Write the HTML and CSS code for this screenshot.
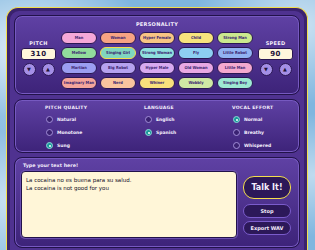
FILE: index.html
```html
<!DOCTYPE html>
<html lang="en">
<head>
    <meta charset="UTF-8">
    <meta name="viewport" content="width=device-width, initial-scale=1.0">
    <title>Voice Maker</title>
    <link rel="stylesheet" href="styles.css">
</head>
<body>
    <div class="frame">
        <div class="app">

            <div class="panel personality">
                <div class="side">
                    <div class="label">PITCH</div>
                    <div class="value">310</div>
                    <div class="arrows">
                        <button class="arrow">&#9660;</button>
                        <button class="arrow">&#9650;</button>
                    </div>
                </div>

                <div class="middle">
                    <div class="label title">PERSONALITY</div>
                    <div class="chips">
                        <div class="chip" style="background:#f5a8d8">Man</div>
                        <div class="chip" style="background:#f7a383">Woman</div>
                        <div class="chip" style="background:#f8c583">Hyper Female</div>
                        <div class="chip" style="background:#f7e37d">Child</div>
                        <div class="chip" style="background:#cbe98e">Strong Man</div>

                        <div class="chip" style="background:#92dc9c">Mellow</div>
                        <div class="chip selected" style="background:#80d6bf">Singing Girl</div>
                        <div class="chip" style="background:#8fe0de">Strong Woman</div>
                        <div class="chip" style="background:#8dcff2">Fly</div>
                        <div class="chip" style="background:#91b2f2">Little Robot</div>

                        <div class="chip" style="background:#9c9ef2">Martian</div>
                        <div class="chip" style="background:#b6a1ef">Big Robot</div>
                        <div class="chip" style="background:#d8aaf0">Hyper Male</div>
                        <div class="chip" style="background:#e9a8e4">Old Woman</div>
                        <div class="chip" style="background:#f4a9cf">Little Man</div>

                        <div class="chip" style="background:#f5a59b">Imaginary Man</div>
                        <div class="chip" style="background:#f9c49e">Nerd</div>
                        <div class="chip" style="background:#f8e07c">Whiner</div>
                        <div class="chip" style="background:#cfe7a4">Wobbly</div>
                        <div class="chip" style="background:#9de8d3">Singing Boy</div>
                    </div>
                </div>

                <div class="side">
                    <div class="label">SPEED</div>
                    <div class="value">90</div>
                    <div class="arrows">
                        <button class="arrow">&#9660;</button>
                        <button class="arrow">&#9650;</button>
                    </div>
                </div>
            </div>

            <div class="panel options">
                <div class="group">
                    <div class="label">PITCH QUALITY</div>
                    <div class="radio"><span class="dot"></span>Natural</div>
                    <div class="radio"><span class="dot"></span>Monotone</div>
                    <div class="radio"><span class="dot on"></span>Sung</div>
                </div>
                <div class="group">
                    <div class="label">LANGUAGE</div>
                    <div class="radio"><span class="dot"></span>English</div>
                    <div class="radio"><span class="dot on"></span>Spanish</div>
                </div>
                <div class="group">
                    <div class="label">VOCAL EFFORT</div>
                    <div class="radio"><span class="dot on"></span>Normal</div>
                    <div class="radio"><span class="dot"></span>Breathy</div>
                    <div class="radio"><span class="dot"></span>Whispered</div>
                </div>
            </div>

            <div class="panel speech">
                <div class="prompt">Type your text here!</div>
                <div class="speech-row">
                    <textarea class="text">La cocaina no es buena para su salud.
La cocaina is not good for you</textarea>
                    <div class="actions">
                        <button class="btn talk">Talk It!</button>
                        <button class="btn">Stop</button>
                        <button class="btn">Export WAV</button>
                    </div>
                </div>
            </div>

        </div>
    </div>
</body>
</html>
```

FILE: styles.css
```css
html {
    height: 250px;
    overflow: hidden;
}

body {
    margin: 0;
    height: 250px;
    overflow: hidden;
    font-family: "DejaVu Sans", sans-serif;
    background:
        radial-gradient(ellipse at 10% 20%, rgba(255, 255, 255, 0.8), transparent 30%),
        radial-gradient(ellipse at 95% 10%, rgba(255, 255, 255, 0.6), transparent 25%),
        radial-gradient(ellipse at 5% 80%, rgba(255, 255, 255, 0.6), transparent 30%),
        radial-gradient(ellipse at 100% 70%, rgba(255, 255, 255, 0.5), transparent 25%),
        #7fb6df;
}

.frame {
    margin: 7px 7px 0 6px;
    height: 243px;
    box-sizing: border-box;
    border: 1px solid #f3de4c;
    border-bottom: none;
    border-radius: 12px 12px 0 0;
    background: #3a226e;
    padding: 3px 3px 0 3px;
}

.app {
    height: 100%;
    box-sizing: border-box;
    border-radius: 9px 9px 0 0;
    background: #4f3290;
    padding: 4px 4px 0 4px;
    display: flex;
    flex-direction: column;
    gap: 4px;
}

.panel {
    border: 1px solid #22124a;
    border-radius: 8px;
    box-shadow: inset 0 0 0 1px #7659c0;
    background: linear-gradient(#5f41a4, #3d2379);
}

.label {
    color: #f4eefc;
    font-size: 5px;
    font-weight: bold;
    letter-spacing: 0.3px;
}

/* personality */

.personality {
    display: grid;
    grid-template-columns: 35px 1fr 35px;
    gap: 5px;
    padding: 4px 6px 5px 6px;
}

.side {
    display: flex;
    flex-direction: column;
    align-items: center;
    padding-top: 20px;
}

.value {
    width: 35px;
    height: 12px;
    margin-top: 2px;
    box-sizing: border-box;
    background: #fff6dc;
    border: 1px solid #2a1753;
    border-radius: 3px;
    font-size: 7px;
    font-weight: bold;
    color: #1e1238;
    text-align: center;
    line-height: 10px;
    letter-spacing: 0.5px;
}

.arrows {
    display: flex;
    gap: 6px;
    margin-top: 3px;
}

.arrow {
    width: 13px;
    height: 13px;
    padding: 0;
    border-radius: 50%;
    border: 1px solid #2a1753;
    background: #a48fe6;
    color: #1e1238;
    font-size: 5px;
    line-height: 11px;
    font-family: "DejaVu Sans", sans-serif;
}

.title {
    text-align: center;
    height: 8px;
    line-height: 8px;
    margin-bottom: 4px;
}

.chips {
    display: grid;
    grid-template-columns: repeat(5, 1fr);
    column-gap: 3px;
    row-gap: 3px;
}

.chip {
    height: 12px;
    box-sizing: border-box;
    border: 1px solid #2a1753;
    border-radius: 6px;
    font-family: "DejaVu Sans Condensed", "DejaVu Sans", sans-serif;
    font-size: 4px;
    font-weight: bold;
    color: #3b2470;
    text-align: center;
    line-height: 10px;
    white-space: nowrap;
    overflow: hidden;
}

.chip.selected {
    border-color: #f3de4c;
}

/* options */

.options {
    display: grid;
    grid-template-columns: 99px 88px 1fr;
    padding: 5px 0 6px 30px;
    height: 54px;
    box-sizing: border-box;
}

.group .label {
    font-size: 4.5px;
    margin-bottom: 3px;
}

.radio {
    display: flex;
    align-items: center;
    gap: 4px;
    height: 13px;
    margin-left: 1px;
    color: #f4eefc;
    font-size: 4.5px;
    font-weight: bold;
}

.dot {
    width: 7px;
    height: 7px;
    box-sizing: border-box;
    border-radius: 50%;
    border: 1px solid #a28ed8;
    background: #3a2272;
    position: relative;
}

.dot.on {
    background: #1a9b9b;
    border-color: #8ed6d6;
}

.dot.on::after {
    content: "";
    position: absolute;
    left: 1.5px;
    top: 1.5px;
    width: 2px;
    height: 2px;
    border-radius: 50%;
    background: #ffffff;
}

/* speech */

.speech {
    height: 91px;
    box-sizing: border-box;
    padding: 5px 7px 8px 6px;
}

.prompt {
    color: #f4eefc;
    font-size: 4.8px;
    font-weight: bold;
    margin-left: 2px;
    height: 8px;
}

.speech-row {
    display: flex;
    gap: 6px;
}

.text {
    width: 216px;
    height: 67px;
    box-sizing: border-box;
    resize: none;
    background: #fff6d8;
    border: 1px solid #22124a;
    border-radius: 4px;
    box-shadow: 0 0 0 1px #6a4fb0;
    padding: 4px 4px;
    font-family: "DejaVu Sans", sans-serif;
    font-size: 5.5px;
    line-height: 8px;
    color: #15102a;
    outline: none;
}

.actions {
    display: flex;
    flex-direction: column;
    gap: 3px;
    padding-top: 5px;
}

.btn {
    width: 48px;
    height: 14px;
    padding: 0;
    border: 1px solid #7b5ccc;
    border-radius: 7px;
    background: #2c1859;
    color: #f4eefc;
    font-family: "DejaVu Sans", sans-serif;
    font-size: 5px;
    font-weight: bold;
}

.btn.talk {
    height: 23px;
    border-radius: 11px;
    border-color: #f3de4c;
    font-size: 8px;
    margin-bottom: 2px;
}
```
